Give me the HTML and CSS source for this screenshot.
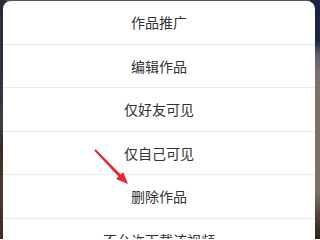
FILE: index.html
```html
<!DOCTYPE html>
<html lang="zh-CN">
<head>
<meta charset="utf-8">
<link rel="stylesheet" href="styles.css">
</head>
<body>
<div class="backdrop">
  <div class="sheet">
    <div class="item">作品推广</div>
    <div class="item">编辑作品</div>
    <div class="item">仅好友可见</div>
    <div class="item">仅自己可见</div>
    <div class="item">删除作品</div>
    <div class="item">不允许下载该视频</div>
  </div>
  <svg class="arrow" width="320" height="239" viewBox="0 0 320 239">
    <polygon points="95.7,149.3 120.7,174.4 123.2,171.9 128,184 116,178.9 118.5,176.4 94.3,150.7" fill="#e8262b"/>
  </svg>
</div>
</body>
</html>
```
FILE: styles.css
```css
html, body {
  margin: 0;
  padding: 0;
  width: 320px;
  height: 239px;
  overflow: hidden;
}
body {
  font-family: "Noto Sans CJK SC", "Noto Sans", sans-serif;
}
.backdrop {
  position: relative;
  width: 320px;
  height: 239px;
  overflow: hidden;
  padding: 1px 5px 0 3px;
  box-sizing: border-box;
  background:
    linear-gradient(to bottom, #2c2a38 0%, #353442 40%, #3e3f4a 50%, #3a2b24 62%, #4a3a30 80%, #3c2c24 100%) left top / 6px 100% no-repeat,
    linear-gradient(to bottom, #1b2142 0%, #1c2344 17%, #5a606e 23%, #7a716b 30%, #7b6f67 80%, #4a3a30 92%, #2e221c 100%) right top / 10px 100% no-repeat,
    #555;
}
.sheet {
  background: #fff;
  border-radius: 8px 8px 0 0;
  display: flex;
  flex-direction: column;
}
.item {
  height: 42.5px;
  border-bottom: 1px solid #ececec;
  display: flex;
  align-items: center;
  justify-content: center;
  font-size: 14px;
  color: #333;
  flex-shrink: 0;
}
.arrow {
  position: absolute;
  left: 0;
  top: 0;
}
```
